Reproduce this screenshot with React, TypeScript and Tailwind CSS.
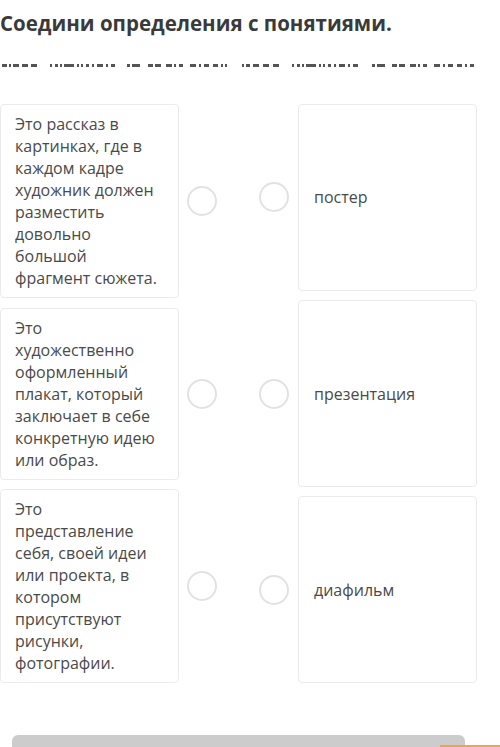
const definitions = [
  ["Это рассказ в", "картинках, где в", "каждом кадре", "художник должен", "разместить", "довольно", "большой", "фрагмент сюжета."],
  ["Это", "художественно", "оформленный", "плакат, который", "заключает в себе", "конкретную идею", "или образ."],
  ["Это", "представление", "себя, своей идеи", "или проекта, в", "котором", "присутствуют", "рисунки,", "фотографии."],
];

const concepts = ["постер", "презентация", "диафильм"];

// cut-off line of text under the title, only its lower edge is visible
const dashGroups: [number, number][][] = [
  [[2, 5], [9, 2], [13, 6], [22, 6], [31, 6]],
  [[50, 2], [55, 3], [60, 2], [64, 10], [77, 2], [81, 2], [86, 3], [92, 2], [97, 6], [106, 2], [111, 4]],
  [[127, 3], [132, 8], [148, 5], [155, 6], [166, 6], [174, 2], [179, 4], [190, 6], [199, 2], [204, 5], [213, 5], [221, 2], [225, 2]],
  [[242, 2], [246, 4], [253, 6], [263, 6], [273, 6]],
  [[292, 2], [297, 3], [302, 2], [306, 10], [319, 2], [323, 2], [328, 3], [334, 2], [339, 6], [348, 2], [353, 5]],
  [[372, 3], [377, 8], [392, 5], [399, 6], [410, 6], [418, 2], [423, 4], [434, 6], [443, 2], [448, 5], [457, 5], [465, 2], [470, 4]],
];

function Circle() {
  return <div className="h-[30px] w-[30px] shrink-0 rounded-full border-2 border-[#e2e2e2] bg-white" />;
}

export default function App() {
  const dashes = dashGroups.flat();
  return (
    <div className="relative h-[747px] w-[500px] overflow-hidden bg-white font-['Open_Sans',sans-serif]">
      <h1 className="mt-[9px] text-[20.5px] leading-[28px] font-bold text-[#3a3a3a]">Соедини определения с понятиями.</h1>

      <div className="relative mt-[27px] h-[3px]">
        {dashes.map(([x, w], i) => (
          <span key={i} className="absolute top-0 h-[3px] bg-[#555]" style={{ left: x, width: w }} />
        ))}
      </div>

      <div className="mt-[37px] flex items-stretch">
        <div className="flex w-[217px] flex-col gap-[9.5px]">
          {definitions.map((lines) => (
            <div key={lines[0] + lines[1]} className="flex items-center">
              <div className="w-[179px] rounded-[4px] border border-[#ebebeb] bg-white py-[8px] pl-[14px] text-[16px] leading-[22px] whitespace-nowrap text-[#4a4a4a]">
                {lines.map((l) => (
                  <div key={l}>{l}</div>
                ))}
              </div>
              <div className="ml-[8px]">
                <Circle />
              </div>
            </div>
          ))}
        </div>

        <div className="ml-[42px] flex flex-col gap-[9.5px]">
          {concepts.map((c) => (
            <div key={c} className="flex flex-1 items-center">
              <Circle />
              <div className="ml-[9px] flex h-full w-[179px] items-center rounded-[4px] border border-[#ebebeb] bg-white pl-[15px] text-[16px] leading-[22px] text-[#4a4a4a]">
                {c}
              </div>
            </div>
          ))}
        </div>
      </div>

      <div className="mt-[52px] ml-[12px] h-[12px] w-[453px] rounded-t-[6px] bg-[#cccccc]" />
      <div className="absolute right-0 bottom-0 h-[2px] w-[60px] bg-[#f0a548]" />
    </div>
  );
}
